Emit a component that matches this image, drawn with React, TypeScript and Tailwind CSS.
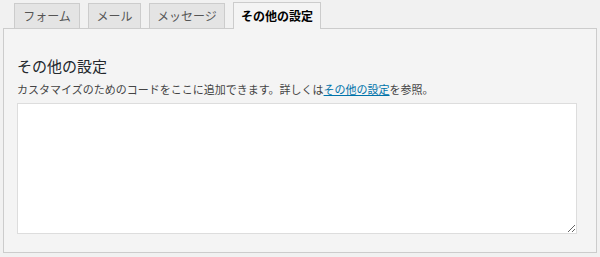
import React from "react";

const font = { fontFamily: '"Noto Sans CJK JP", "Noto Sans", sans-serif' };

export default function App() {
  const tabs = [
    { label: "フォーム", w: "w-[66px]" },
    { label: "メール", w: "w-[53px]" },
    { label: "メッセージ", w: "w-[76px]" },
  ];
  return (
    <div className="w-[600px] h-[257px] bg-[#f1f1f1] flex flex-col" style={font}>
      <div className="flex items-end pl-[14px] pt-[2px] gap-[8px] h-[28px]">
        {tabs.map((t) => (
          <div
            key={t.label}
            className={`${t.w} h-[25px] border border-b-0 border-[#cccccc] bg-[#e4e4e4] text-[#555555] text-[12px] flex items-center justify-center leading-none`}
          >
            {t.label}
          </div>
        ))}
        <div className="w-[88px] h-[27px] -mb-px relative z-10 border border-b-0 border-[#cccccc] bg-[#f4f4f4] text-[#000000] text-[12px] font-bold flex items-center justify-center leading-none">
          その他の設定
        </div>
      </div>
      <div className="ml-[3px] w-[594px] h-[225px] border border-[#cccccc] bg-[#f4f4f4] flex flex-col px-[13px]">
        <div className="mt-[28px] text-[15px] leading-[18px] text-[#23282d]">その他の設定</div>
        <div className="mt-[7px] text-[11px] leading-[14px] text-[#444444]">
          カスタマイズのためのコードをここに追加できます。詳しくは
          <a href="#" className="text-[#0073aa] underline">
            その他の設定
          </a>
          を参照。
        </div>
        <textarea className="mt-[7px] w-[560px] h-[131px] bg-white border border-[#dddddd] outline-none resize" />
      </div>
    </div>
  );
}
